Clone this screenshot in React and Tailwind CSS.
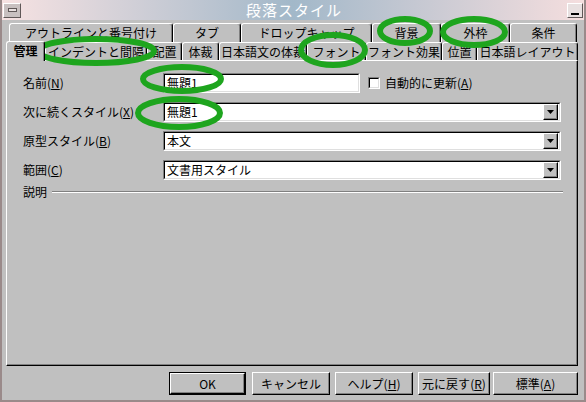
import React from "react";

const font = { fontFamily: '"Noto Sans CJK JP", "Noto Sans", sans-serif' };

const Tab = ({ label, className = "" }) => (
  <div
    className={`flex items-center justify-center border-l border-t border-white border-r border-r-black shadow-[inset_-1px_0_0_#808080] rounded-t-[3px] text-[12px] text-black whitespace-nowrap ${className}`}
  >
    {label}
  </div>
);

const Mn = ({ pre, k }) => (
  <span>
    {pre}(<span className="underline">{k}</span>)
  </span>
);

const Sunken = ({ className = "", children }) => (
  <div className={`border-t border-l border-t-[#808080] border-l-[#808080] border-b border-r border-b-white border-r-white ${className}`}>
    <div className="h-full w-full border-t border-l border-t-black border-l-black border-b border-r border-b-[#dfdfdf] border-r-[#dfdfdf] bg-white flex items-center">
      {children}
    </div>
  </div>
);

const Combo = ({ value }) => (
  <Sunken className="w-[398px] h-[20px]">
    <span className="flex-1 pl-[2px] text-[12px] text-black">{value}</span>
    <div className="w-[15px] h-[16px] mr-[1px] bg-[#c0c0c0] border-t border-l border-white border-b border-r border-b-black border-r-black shadow-[inset_-1px_-1px_0_#808080] flex items-center justify-center">
      <svg width="7" height="4" viewBox="0 0 7 4">
        <polygon points="0,0 7,0 3.5,4" fill="#000" />
      </svg>
    </div>
  </Sunken>
);

const Row = ({ label, children }) => (
  <div className="flex items-center h-[20px]">
    <div className="w-[140px] text-[12px] text-black">{label}</div>
    {children}
  </div>
);

const Btn = ({ children, className = "", def }) => (
  <div className={`h-[23px] ${def ? "border border-black" : ""} ${className}`}>
    <div className="h-full w-full border-t border-l border-white border-b border-r border-b-black border-r-black shadow-[inset_-1px_-1px_0_#808080] flex items-center justify-center text-[12px] text-black">
      {children}
    </div>
  </div>
);

export default function App() {
  return (
    <div
      className="relative w-[586px] h-[402px] bg-[#c0c0c0] border-x-2 border-b-2 border-[#9a8a8a] overflow-hidden"
      style={font}
    >
      {/* Title bar */}
      <div className="h-[20px] flex items-center bg-gradient-to-r from-[#f7e2e2] via-[#a2b8c9] to-[#f5dede]">
        <div className="ml-[1px] w-[18px] h-[15px] bg-[#c8c0c0] border-t border-l border-white border-b border-r border-b-[#605858] border-r-[#605858] flex items-center justify-center">
          <div className="w-[9px] h-[4px] border border-[#605858] bg-[#e8e0e0]" />
        </div>
        <div className="flex-1 text-center text-[15px] text-white tracking-[1px] leading-[18px]">
          段落スタイル
        </div>
        <div className="mr-[1px] w-[16px] h-[15px] bg-[#e8e0e0] border-t border-l border-white border-b border-r border-b-[#605858] border-r-[#605858] flex items-end justify-center pb-[2px]">
          <div className="w-[8px] h-[2px] bg-black" />
        </div>
      </div>

      {/* Tab row 1 */}
      <div className="mt-[3px] ml-[7px] flex h-[19px]">
        <Tab label="アウトラインと番号付け" className="w-[164px]" />
        <Tab label="タブ" className="w-[68px]" />
        <Tab label="ドロップキャップ" className="w-[131px]" />
        <Tab label="背景" className="w-[69px]" />
        <Tab label="外枠" className="w-[69px]" />
        <Tab label="条件" className="w-[67px]" />
      </div>

      {/* Tab row 2 */}
      <div className="ml-[4px] flex items-end h-[18px]">
        <Tab label="管理" className="w-[39px] h-[20px] relative z-10 -mb-[1px] bg-[#c0c0c0] pb-[2px] font-bold" />
        <Tab label="インデントと間隔" className="w-[102px] h-[18px]" />
        <Tab label="配置" className="w-[35px] h-[18px]" />
        <Tab label="体裁" className="w-[37px] h-[18px]" />
        <Tab label="日本語文の体裁" className="w-[88px] h-[18px]" />
        <Tab label="フォント" className="w-[59px] h-[18px]" />
        <Tab label="フォント効果" className="w-[76px] h-[18px]" />
        <Tab label="位置" className="w-[35px] h-[18px]" />
        <Tab label="日本語レイアウト" className="w-[101px] h-[18px]" />
      </div>

      {/* Panel */}
      <div className="ml-[4px] w-[572px] h-[306px] border-t border-l border-white border-b border-r border-b-black border-r-black shadow-[inset_-1px_-1px_0_#808080] pt-[12px] pl-[16px]">
        <div className="flex flex-col gap-[9px]">
          <Row label={<Mn pre="名前" k="N" />}>
            <Sunken className="w-[197px] h-[20px]">
              <span className="pl-[2px] text-[12px] text-black">無題1</span>
            </Sunken>
            <div className="ml-[8px] w-[12px] h-[12px] border border-t-[#808080] border-l-[#808080] border-b-white border-r-white">
              <div className="w-full h-full bg-white border border-t-black border-l-black border-b-[#dfdfdf] border-r-[#dfdfdf]" />
            </div>
            <span className="ml-[5px] text-[12px] text-black">
              <Mn pre="自動的に更新" k="A" />
            </span>
          </Row>
          <Row label={<Mn pre="次に続くスタイル" k="X" />}>
            <Combo value="無題1" />
          </Row>
          <Row label={<Mn pre="原型スタイル" k="B" />}>
            <Combo value="本文" />
          </Row>
          <Row label={<Mn pre="範囲" k="C" />}>
            <Combo value="文書用スタイル" />
          </Row>
        </div>
        <div className="mt-[5px] flex items-center h-[14px]">
          <span className="text-[12px] text-black">説明</span>
          <div className="ml-[5px] w-[511px] h-[2px] border-t border-t-[#808080] border-b border-b-white" />
        </div>
      </div>

      {/* Buttons */}
      <div className="mt-[6px] flex justify-end pr-[6px]">
        <Btn def className="w-[77px]">OK</Btn>
        <Btn className="w-[78px] ml-[6px]">キャンセル</Btn>
        <Btn className="w-[78px] ml-[5px]">
          <Mn pre="ヘルプ" k="H" />
        </Btn>
        <Btn className="w-[72px] ml-[5px]">
          <Mn pre="元に戻す" k="R" />
        </Btn>
        <Btn className="w-[85px] ml-[3px]">
          <Mn pre="標準" k="A" />
        </Btn>
      </div>

      {/* Green hand-drawn annotations */}
      <svg className="absolute left-0 top-0 pointer-events-none" width="586" height="402">
        <g fill="none" stroke="#1ea51e" strokeWidth="6">
          <ellipse cx="94" cy="51" rx="58" ry="12" />
          <ellipse cx="180" cy="79" rx="39" ry="12" />
          <ellipse cx="177" cy="113" rx="41" ry="14" />
          <ellipse cx="331" cy="50" rx="32" ry="15" />
          <ellipse cx="403" cy="31" rx="25" ry="12" />
          <ellipse cx="472" cy="32" rx="31" ry="13" />
        </g>
      </svg>
    </div>
  );
}
